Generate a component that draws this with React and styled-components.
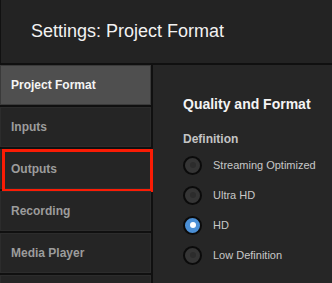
import React, { useState } from 'react';
import styled, { createGlobalStyle } from 'styled-components';

const GlobalStyle = createGlobalStyle`
  html, body {
    margin: 0;
    padding: 0;
    background: #101010;
  }
  * { box-sizing: border-box; }
`;

const menu = ['Project Format', 'Inputs', 'Outputs', 'Recording', 'Media Player', ''];
const options = ['Streaming Optimized', 'Ultra HD', 'HD', 'Low Definition'];

const App = () => {
  const [selected, setSelected] = useState('HD');

  return (
    <Window>
      <GlobalStyle />
      <Header>Settings: Project Format</Header>
      <Body>
        <Sidebar>
          {menu.map((item, i) => (
            <MenuItem key={i} active={item === 'Project Format'}>
              {item}
              {item === 'Outputs' && <Highlight />}
            </MenuItem>
          ))}
        </Sidebar>
        <Content>
          <SectionTitle>Quality and Format</SectionTitle>
          <Label>Definition</Label>
          <Options>
            {options.map(opt => (
              <OptionRow key={opt} onClick={() => setSelected(opt)}>
                <Radio checked={opt === selected} />
                {opt}
              </OptionRow>
            ))}
          </Options>
        </Content>
      </Body>
    </Window>
  );
};

export default App;

const Window = styled.div`
width:332px;
height:283px;
overflow:hidden;
display:flex;
flex-direction:column;
background:#101010;
font-family:"Liberation Sans", Arial, sans-serif;
`;

const Header = styled.div`
height:63px;
flex-shrink:0;
display:flex;
align-items:center;
padding-left:30px;
padding-bottom:1px;
background:#232323;
border-left:1px solid #111;
color:#f2f2f2;
font-size:18px;
`;

const Body = styled.div`
flex:1;
display:flex;
gap:2px;
margin-top:2px;
`;

const Sidebar = styled.div`
width:151px;
flex-shrink:0;
display:flex;
flex-direction:column;
gap:2px;
`;

const MenuItem = styled.div`
position:relative;
height:40px;
flex-shrink:0;
display:flex;
align-items:center;
padding-left:10px;
font-size:12px;
font-weight:700;
color:${props => props.active ? '#f4f4f4' : '#9c9c9c'};
background:${props => props.active ? '#4f4f4f' : '#252525'};
border:1px solid ${props => props.active ? '#3a3a3a' : '#2c2c2c'};
`;

const Highlight = styled.div`
position:absolute;
top:-1px;
left:1px;
right:-3px;
bottom:-4px;
border:3px solid #fa1c05;
`;

const Content = styled.div`
flex:1;
background:#262626;
padding:31px 0 0 30px;
`;

const SectionTitle = styled.div`
color:#f4f4f4;
font-size:14px;
font-weight:700;
`;

const Label = styled.div`
margin-top:20px;
color:#c4c4c4;
font-size:12px;
font-weight:700;
`;

const Options = styled.div`
margin-top:4px;
display:flex;
flex-direction:column;
`;

const OptionRow = styled.div`
height:30px;
display:flex;
align-items:center;
gap:11px;
color:#c8c8c8;
font-size:11px;
cursor:pointer;
`;

const Radio = styled.span`
position:relative;
width:19px;
height:19px;
border-radius:50%;
border:2px solid #0b0b0b;
background:${props => props.checked ? '#4b8fd5' : '#353535'};

&::after{
  content:'';
  position:absolute;
  top:50%;
  left:50%;
  width:6px;
  height:6px;
  margin:-3px 0 0 -3px;
  border-radius:50%;
  background:${props => props.checked ? '#ffffff' : '#2c2c2c'};
}
`;
